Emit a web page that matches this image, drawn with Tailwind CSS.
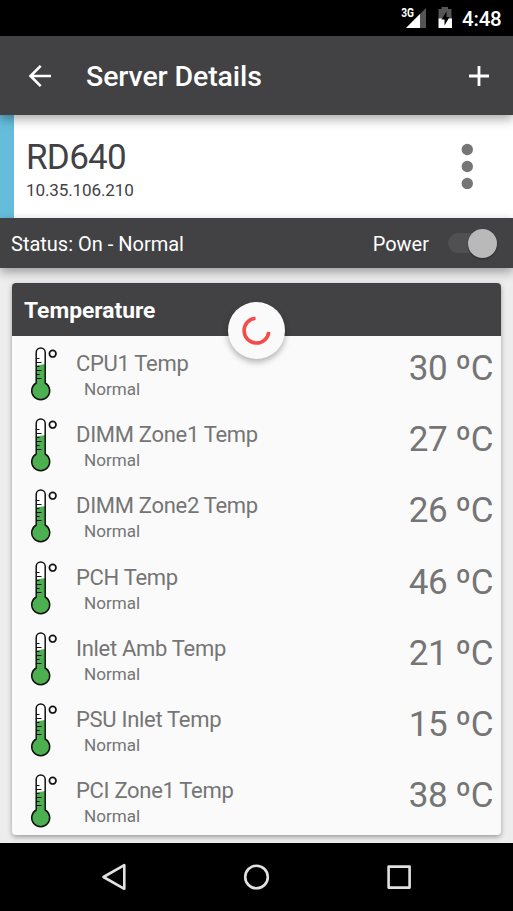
<!DOCTYPE html>
<html lang="en">
<head>
<meta charset="utf-8">
<title>Server Details</title>
<script src="https://cdn.jsdelivr.net/npm/@tailwindcss/browser@4"></script>
</head>
<body class="w-[513px] h-[911px] overflow-hidden bg-[#ededed] font-['Roboto',sans-serif] flex flex-col whitespace-nowrap">
<div class="h-9 shrink-0 bg-black text-white flex justify-end items-start">
  <svg class="w-[72px] h-9 -mr-2" viewBox="0 0 72 36" fill="none">
    <text x="3.200" y="16.800" font-size="12" font-weight="700" fill="#fff" textLength="12.800" lengthAdjust="spacingAndGlyphs">3G</text>
    <path d="M28 8V28H8Z" fill="#555"/><path d="M22 14V28H8Z" fill="#fff"/>
    <path d="M40.500 9h3V7h6.500v2h3.500v10H40.500Z" fill="#555"/><path d="M40.500 18.500h13.500V28h-13.500Z" fill="#fff"/>
    <path d="M48.500 11.500L43.500 19.500H46.500V25.500L51.500 17H48.500Z" fill="#000"/>
  </svg>
  <span class="w-[51px] text-[20.500px] leading-9 font-medium pt-px tracking-[-0.2px]">4:48</span>
</div>
<header class="relative z-20 h-[79px] shrink-0 bg-[#424244] text-white flex items-center pl-7 pr-[23px] shadow-[0_4px_10px_rgba(0,0,0,0.35)]">
  <svg class="w-6 h-6" viewBox="0 0 24 24" fill="none" stroke="#fff" stroke-width="2.600"><path d="M23 12H3M12.700 1.800L2.500 12L12.700 22.200"/></svg>
  <h1 class="ml-[34px] mt-[3px] text-[28.500px] leading-8 font-medium tracking-[-0.1px]">Server Details</h1>
  <svg class="ml-auto w-[22px] h-[22px]" viewBox="0 0 22 22" stroke="#fff" stroke-width="2.800"><path d="M1 11H21M11 1V21"/></svg>
</header>
<section class="h-[103px] shrink-0 bg-white border-l-[14px] border-[#65bddb] flex justify-between pl-3 pr-10 text-[#424244]">
  <div class="pt-[22px]">
    <div class="text-[35px] leading-[42px] tracking-[-0.7px]">RD640</div>
    <div class="text-[17.100px] leading-5 mt-px tracking-[-0.15px]">10.35.106.210</div>
  </div>
  <svg class="w-3 h-[46px] mt-7" viewBox="0 0 12 46" fill="#757575"><circle cx="6.300" cy="6.500" r="5.700"/><circle cx="6.300" cy="23.500" r="5.700"/><circle cx="6.300" cy="40.500" r="5.700"/></svg>
</section>
<section class="relative z-10 h-[50px] shrink-0 bg-[#424244] text-white flex items-center pl-[11px] pr-4 text-[20px] shadow-[0_4px_10px_rgba(0,0,0,0.35)]">
  <span class="mt-0.5">Status: On - Normal</span>
  <span class="ml-auto mr-5 mt-0.5">Power</span>
  <div class="w-12 h-[29px] flex items-center"><div class="w-[38px] h-5 -ml-px rounded-full bg-[#505052]"></div><div class="-ml-[18px] w-[29px] h-[29px] shrink-0 rounded-full bg-[#b9b9b9] shadow-[0_1px_2px_rgba(0,0,0,0.4)]"></div></div>
</section>
<main class="h-[575px] shrink-0 px-3 pt-[15px]">
  <section class="relative h-[552px] bg-[#fafafa] rounded shadow-[0_2px_5px_rgba(0,0,0,0.35)]">
    <h2 class="h-[53px] rounded-t bg-[#424244] text-white text-[22.800px] leading-[55px] font-bold pl-3">Temperature</h2>
    <div id="rows"></div>
    <div class="absolute left-[216px] top-[19px] w-[57px] h-[57px] rounded-full bg-[#fafafa] shadow-[0_3px_6px_rgba(0,0,0,0.3)] flex items-center justify-center">
      <svg class="w-[30px] h-[30px]" viewBox="0 0 30 30" fill="none" stroke="#f44b4b" stroke-width="3.600"><path d="M13.500 2.200A12.400 12.400 0 1 0 26.800 16"/></svg>
    </div>
  </section>
</main>
<nav class="relative z-10 h-[68px] shrink-0 bg-black">
  <svg class="w-[513px] h-[68px]" viewBox="0 0 513 68" fill="none" stroke="#e2e2e2" stroke-width="2.600" stroke-linejoin="round"><path d="M124.300 22.200V45.800L103.500 34Z"/><circle cx="256.500" cy="34" r="11.300"/><rect x="388.600" y="23.600" width="21" height="21"/></svg>
</nav>
<template id="row">
  <div class="h-[71.200px] flex text-[#757575]">
    <svg class="ml-[18px] mt-[10px] w-[30px] h-[56px] shrink-0" viewBox="0 0 30 56" fill="none">
      <path d="M6.200 37V6.500a4.500 4.500 0 0 1 9 0V37a9 9 0 1 1-9 0Z" fill="#fff"/>
      <path d="M6.200 19.500L15.200 18V37a9 9 0 1 1-9 0Z" fill="#4caf50"/>
      <path d="M6.200 37V6.500a4.500 4.500 0 0 1 9 0V37a9 9 0 1 1-9 0Z" stroke="#111" stroke-width="1.500"/>
      <path d="M6 12.500h3.500M6 16.500h5.500M6 20.500h3.500M6 24.500h5.500M6 28.500h3.500M6 32.500h5.500" stroke="#111" stroke-width="1.200"/>
      <circle cx="22.700" cy="7.700" r="3.300" fill="#fff" stroke="#111" stroke-width="1.700"/>
    </svg>
    <div class="ml-4 pt-[14px]">
      <div data-name class="text-[22px] leading-7 tracking-[-0.3px]"></div>
      <div class="ml-2 -mt-px text-[17.100px] leading-6">Normal</div>
    </div>
    <div data-temp class="ml-auto pr-2 pt-3 text-[35px] leading-[42px] tracking-[-0.5px]"></div>
  </div>
</template>
<script>
const readings = [["CPU1 Temp",30],["DIMM Zone1 Temp",27],["DIMM Zone2 Temp",26],["PCH Temp",46],["Inlet Amb Temp",21],["PSU Inlet Temp",15],["PCI Zone1 Temp",38]];
for (const [name, temp] of readings) {
  const row = document.getElementById('row').content.cloneNode(true);
  row.querySelector('[data-name]').textContent = name;
  row.querySelector('[data-temp]').textContent = temp + ' ºC';
  document.getElementById('rows').append(row);
}
</script>
</body>
</html>
